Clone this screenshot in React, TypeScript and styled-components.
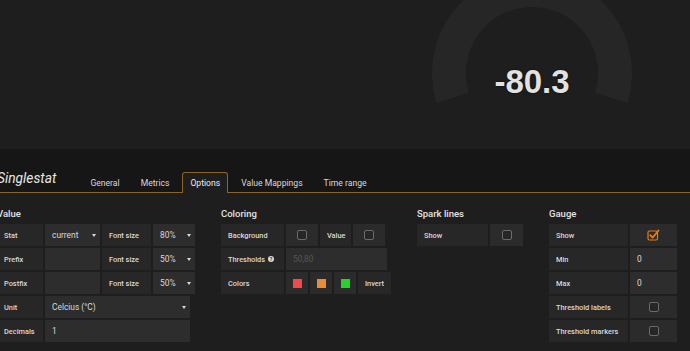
import React from "react";
import styled, { createGlobalStyle, css } from "styled-components";

const Global = createGlobalStyle`
  html, body { margin: 0; padding: 0; background: #1f1e1f; }
  body { font-family: Roboto, "Liberation Sans", sans-serif; overflow: hidden; }
  * { box-sizing: border-box; }
`;

const Page = styled.div`
  width: 690px;
  height: 351px;
  overflow: hidden;
  display: flex;
  flex-direction: column;
  background: #1f1e1f;
  color: #d8d9da;
`;

const Viz = styled.div`
  height: 149px;
  flex: none;
  display: flex;
  justify-content: flex-end;
  padding-right: 48px;
  overflow: hidden;
`;

const GaugeBox = styled.div`
  position: relative;
  width: 220px;
  height: 149px;
`;

const GaugeValue = styled.div`
  position: absolute;
  left: 0;
  right: 0;
  top: 65px;
  text-align: center;
  font-family: "Liberation Sans", Arial, sans-serif;
  font-weight: bold;
  font-size: 33px;
  line-height: 33px;
  color: #e2e2e2;
  text-shadow: 0 0 2px rgba(0, 0, 0, 0.9);
`;

const EditorHeader = styled.div`
  height: 44px;
  flex: none;
  background: #161616;
  border-bottom: 1px solid #8b6428;
  display: flex;
  align-items: flex-end;
  margin-left: -3px;
`;

const Title = styled.div`
  font-style: italic;
  font-size: 13.8px;
  line-height: 16px;
  color: #e6e6e6;
  margin: 0 26px 6px 0;
`;

const Tabs = styled.div`
  display: flex;
  gap: 5px;
  align-items: flex-end;
`;

const Tab = styled.div<{ $active?: boolean }>`
  height: 21px;
  padding: 0 7px;
  margin-bottom: -1px;
  display: flex;
  align-items: center;
  font-size: 8.6px;
  color: #d8d9da;
  border: 1px solid transparent;
  border-bottom: 0;
  border-radius: 3px 3px 0 0;
  ${(p) =>
    p.$active &&
    css`
      border-color: #8b6428;
      background: #1f1e1f;
      color: #ececec;
    `}
`;

const Body = styled.div`
  display: flex;
  gap: 26px;
  padding-top: 14px;
  margin-left: -3px;
`;

const Section = styled.div`
  display: flex;
  flex-direction: column;
`;

const SectionTitle = styled.h5`
  margin: 0 0 4px;
  font-size: 9.5px;
  font-weight: 500;
  line-height: 13px;
  color: #e3e3e3;
`;

const Rows = styled.div`
  display: flex;
  flex-direction: column;
  gap: 2px;
`;

const Row = styled.div`
  display: flex;
  gap: 2px;
  height: 22px;
`;

const Cell = styled.div<{ $w: number }>`
  width: ${(p) => p.$w}px;
  flex: none;
  height: 22px;
  display: flex;
  align-items: center;
  white-space: nowrap;
`;

const Label = styled(Cell)`
  padding: 0 7px;
  background: #272727;
  font-size: 7.4px;
  font-weight: 500;
  color: #d8d9da;
`;

const Input = styled(Cell)<{ $placeholder?: boolean }>`
  padding: 0 4px 0 7px;
  background: #2d2d2d;
  font-size: 8.4px;
  color: ${(p) => (p.$placeholder ? "#555555" : "#d8d9da")};
  justify-content: space-between;
`;

const Caret = styled.span`
  width: 0;
  height: 0;
  border-left: 2.5px solid transparent;
  border-right: 2.5px solid transparent;
  border-top: 3px solid #d8d9da;
  margin-top: 1px;
`;

const CheckCell = styled(Cell)`
  background: #2b2b2b;
  justify-content: center;
`;

const Box = styled.span`
  width: 10px;
  height: 10px;
  border: 1px solid #6b6b6b;
  border-radius: 2px;
  background: #262626;
`;

const Swatch = styled.span<{ $c: string }>`
  width: 9px;
  height: 9px;
  background: ${(p) => p.$c};
`;

const Help = styled.span`
  width: 6px;
  height: 6px;
  border-radius: 50%;
  background: #d8d9da;
  color: #1f1e1f;
  font-size: 5px;
  font-weight: bold;
  line-height: 6px;
  text-align: center;
  margin-left: 3px;
`;

const Select = ({ w, children }: { w: number; children?: React.ReactNode }) => (
  <Input $w={w}>
    <span>{children}</span>
    <Caret />
  </Input>
);

const Check = ({ w, checked }: { w: number; checked?: boolean }) => (
  <CheckCell $w={w}>
    {checked ? (
      <svg width="13" height="12" viewBox="0 0 13 12">
        <rect x="1" y="2" width="9.5" height="9" rx="1.5" fill="none" stroke="#eb7b18" strokeWidth="1.2" />
        <path d="M3.3 6.2 L5.6 8.6 L11.5 1.5" fill="none" stroke="#eb7b18" strokeWidth="1.8" strokeLinecap="round" strokeLinejoin="round" />
      </svg>
    ) : (
      <Box />
    )}
  </CheckCell>
);

const Gauge = () => {
  const cx = 110;
  const cy = 73;
  const r = 83;
  const a = (17.5 * Math.PI) / 180;
  const dx = r * Math.cos(a);
  const dy = r * Math.sin(a);
  return (
    <GaugeBox>
      <svg width="220" height="149" viewBox="0 0 220 149">
        <path
          d={`M ${cx - dx} ${cy + dy} A ${r} ${r} 0 1 1 ${cx + dx} ${cy + dy}`}
          fill="none"
          stroke="#262626"
          strokeWidth="34"
        />
      </svg>
      <GaugeValue>-80.3</GaugeValue>
    </GaugeBox>
  );
};

export default function App() {
  return (
    <Page>
      <Global />
      <Viz>
        <Gauge />
      </Viz>
      <EditorHeader>
        <Title>Singlestat</Title>
        <Tabs>
          <Tab>General</Tab>
          <Tab>Metrics</Tab>
          <Tab $active>Options</Tab>
          <Tab>Value Mappings</Tab>
          <Tab>Time range</Tab>
        </Tabs>
      </EditorHeader>
      <Body>
        <Section>
          <SectionTitle>Value</SectionTitle>
          <Rows>
            <Row>
              <Label $w={46}>Stat</Label>
              <Select w={55}>current</Select>
              <Label $w={49}>Font size</Label>
              <Select w={42}>80%</Select>
            </Row>
            <Row>
              <Label $w={46}>Prefix</Label>
              <Input $w={55} />
              <Label $w={49}>Font size</Label>
              <Select w={42}>50%</Select>
            </Row>
            <Row>
              <Label $w={46}>Postfix</Label>
              <Input $w={55} />
              <Label $w={49}>Font size</Label>
              <Select w={42}>50%</Select>
            </Row>
            <Row>
              <Label $w={46}>Unit</Label>
              <Select w={145}>Celcius (°C)</Select>
            </Row>
            <Row>
              <Label $w={46}>Decimals</Label>
              <Input $w={145}>1</Input>
            </Row>
          </Rows>
        </Section>
        <Section>
          <SectionTitle>Coloring</SectionTitle>
          <Rows>
            <Row>
              <Label $w={63}>Background</Label>
              <Check w={32} />
              <Label $w={31}>Value</Label>
              <Check w={32} />
            </Row>
            <Row>
              <Label $w={63}>
                Thresholds<Help>?</Help>
              </Label>
              <Input $w={101} $placeholder>
                50,80
              </Input>
            </Row>
            <Row>
              <Label $w={63}>Colors</Label>
              <CheckCell $w={22}>
                <Swatch $c="#f24a4a" />
              </CheckCell>
              <CheckCell $w={22}>
                <Swatch $c="#e88b3a" />
              </CheckCell>
              <CheckCell $w={22}>
                <Swatch $c="#2bd12b" />
              </CheckCell>
              <Label $w={33}>Invert</Label>
            </Row>
          </Rows>
        </Section>
        <Section>
          <SectionTitle>Spark lines</SectionTitle>
          <Rows>
            <Row>
              <Label $w={71}>Show</Label>
              <Check w={33} />
            </Row>
          </Rows>
        </Section>
        <Section>
          <SectionTitle>Gauge</SectionTitle>
          <Rows>
            <Row>
              <Label $w={79}>Show</Label>
              <Check w={47} checked />
            </Row>
            <Row>
              <Label $w={79}>Min</Label>
              <Input $w={47}>0</Input>
            </Row>
            <Row>
              <Label $w={79}>Max</Label>
              <Input $w={47}>0</Input>
            </Row>
            <Row>
              <Label $w={79}>Threshold labels</Label>
              <Check w={47} />
            </Row>
            <Row>
              <Label $w={79}>Threshold markers</Label>
              <Check w={47} />
            </Row>
          </Rows>
        </Section>
      </Body>
    </Page>
  );
}
